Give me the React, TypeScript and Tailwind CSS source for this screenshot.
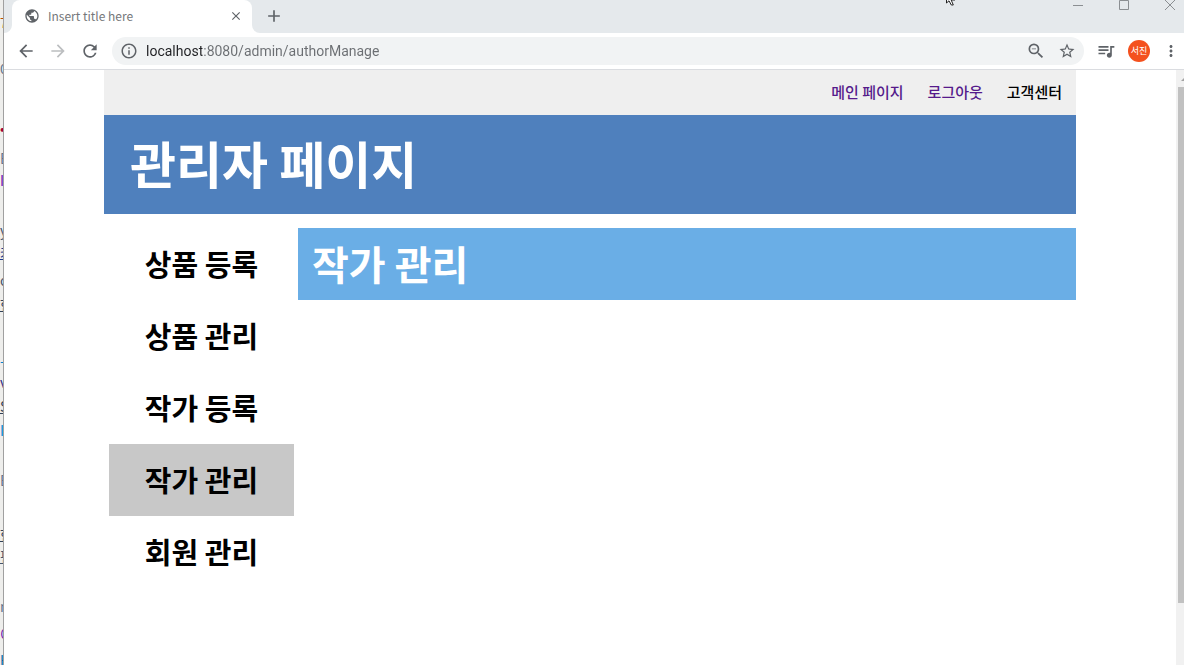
import {
  MdAdd,
  MdArrowBack,
  MdArrowForward,
  MdClose,
  MdInfoOutline,
  MdMoreVert,
  MdPublic,
  MdQueueMusic,
  MdRefresh,
  MdStarBorder,
  MdZoomOut,
} from "react-icons/md";
import clsx from "clsx";

const menu = [
  { label: "상품 등록", active: false },
  { label: "상품 관리", active: false },
  { label: "작가 등록", active: false },
  { label: "작가 관리", active: true },
  { label: "회원 관리", active: false },
];

// letters of the window behind that stick out at the left edge
const slivers = [
  { text: "7", row: "h-[46px] pt-3 text-amber-700" },
  { text: "0", row: "h-[60px] pt-3 text-slate-500" },
  { text: "•", row: "h-[42px] pt-3 text-rose-800" },
  { text: "E", row: "h-[22px] text-slate-500" },
  { text: "I", row: "h-[50px] text-purple-800" },
  { text: "y", row: "h-[22px] text-slate-600" },
  { text: "커", row: "h-[28px] text-blue-900 underline" },
  { text: "o", row: "h-[24px] text-slate-600" },
  { text: "현", row: "h-[56px] text-slate-700 underline" },
  { text: "-", row: "h-[22px] text-sky-600" },
  { text: "v", row: "h-[24px] text-indigo-900" },
  { text: "S", row: "h-[24px] text-slate-700 underline" },
  { text: "I", row: "h-[50px] text-sky-600" },
  { text: "E", row: "h-[54px] text-slate-500" },
  { text: "현", row: "h-[22px] text-slate-700 underline" },
  { text: "편", row: "h-[50px] text-slate-600 underline" },
  { text: "m", row: "h-[28px] text-slate-500" },
  { text: "이", row: "h-[26px] text-purple-800" },
  { text: "H", row: "h-[20px] text-sky-700" },
];

function BackWindow() {
  return (
    <div
      aria-hidden="true"
      className="h-full w-1 shrink-0 overflow-hidden border-r border-[#a0a0a0] bg-[#eeeeec]"
    >
      {slivers.map((s, i) => (
        <div key={i} className={clsx("text-sm leading-5", s.row)}>
          {s.text}
        </div>
      ))}
    </div>
  );
}

function TabStrip() {
  return (
    <div className="relative flex h-[33px] items-stretch bg-[#e5e9ec] text-[#5f6368]">
      <svg className="h-2 w-2 self-end" viewBox="0 0 8 8" fill="#fff">
        <path d="M8 0v8H0a8 8 0 0 0 8-8z" />
      </svg>
      <div className="flex w-[240px] items-center rounded-t-lg bg-white pr-2 pb-px pl-3">
        <MdPublic className="size-4" />
        <span className="ml-2 flex-1 text-xs leading-4 text-[#75777a]">
          Insert title here
        </span>
        <button aria-label="Close tab" className="flex size-4 items-center justify-center">
          <MdClose className="size-[14px]" />
        </button>
      </div>
      <svg className="h-2 w-2 self-end" viewBox="0 0 8 8" fill="#fff">
        <path d="M0 0v8h8a8 8 0 0 1-8-8z" />
      </svg>
      <button aria-label="New tab" className="ml-1 flex w-5 items-center justify-center pb-px">
        <MdAdd className="size-5" />
      </button>

      <div className="ml-auto flex items-start gap-[35px] pr-2 text-[#8b8f92]">
        <button aria-label="Minimize">
          <svg className="h-[11px] w-[11px]" viewBox="0 0 11 11" stroke="currentColor">
            <path d="M0 5.5h10" />
          </svg>
        </button>
        <button aria-label="Maximize">
          <svg className="h-[11px] w-[11px]" viewBox="0 0 11 11" fill="none" stroke="currentColor">
            <path d="M.5.5h9v9h-9z" />
          </svg>
        </button>
        <button aria-label="Close">
          <svg className="h-[11px] w-[11px]" viewBox="0 0 11 11" stroke="currentColor">
            <path d="M0 0l10 10M10 0L0 10" />
          </svg>
        </button>
      </div>

      {/* mouse pointer, its upper part is off screen */}
      <svg
        className="absolute top-0 right-[228px] h-[6px] w-[11px]"
        viewBox="0 0 11 6"
        fill="#fff"
        stroke="#222"
      >
        <path d="M1.5-8v11L4 .8 6.3 5h2L6.200 0H10z" />
      </svg>
    </div>
  );
}

function Toolbar() {
  return (
    <div className="flex h-[37px] items-center border-b border-[#dadce0] bg-white pl-3 text-[#5f6368]">
      <button aria-label="Back" className="mr-3">
        <MdArrowBack className="size-5" />
      </button>
      <button aria-label="Forward" className="mr-3 text-[#bcbec0]">
        <MdArrowForward className="size-5" />
      </button>
      <button aria-label="Reload" className="mr-3">
        <MdRefresh className="size-5" />
      </button>
      <div className="flex h-7 flex-1 items-center rounded-full bg-[#f1f3f4] pr-2 pl-2">
        <MdInfoOutline className="size-[18px]" />
        <input
          aria-label="Address"
          defaultValue="localhost:8080/admin/authorManage"
          className="ml-2 h-5 min-w-0 flex-1 bg-[linear-gradient(to_right,#202124_56px,#6b6e72_56px)] bg-clip-text font-[Roboto,sans-serif] text-sm text-transparent outline-none"
        />
        <button aria-label="Zoom" className="mr-3">
          <MdZoomOut className="size-5" />
        </button>
        <button aria-label="Bookmark">
          <MdStarBorder className="size-[18px]" />
        </button>
      </div>
      <button aria-label="Media" className="ml-3">
        <MdQueueMusic className="size-5" />
      </button>
      <button
        aria-label="Profile"
        className="ml-3 size-[22px] rounded-full bg-[#f4511e] text-[9px] leading-[22px] text-white"
      >
        서진
      </button>
      <button aria-label="Menu" className="ml-3 w-[22px]">
        <MdMoreVert className="size-[18px]" />
      </button>
    </div>
  );
}

function AdminPage() {
  return (
    <main className="flex-1 bg-white">
      <div className="mx-auto w-full max-w-[972px]">
        <nav className="flex h-[45px] items-center justify-end gap-6 bg-[#efefef] pr-[14px] pb-[2px] text-[15px] leading-5 font-medium text-[#551a8b]">
          <a href="#main">메인 페이지</a>
          <a href="#logout">로그아웃</a>
          <a href="#center" className="text-black">
            고객센터
          </a>
        </nav>
        <header className="flex h-[99px] items-center bg-[#4f80bd] pb-[6px] pl-[26px] text-white">
          <h1 className="text-[50px] leading-none font-bold">관리자 페이지</h1>
        </header>
        <div className="mt-[14px] flex items-start">
          <ul className="w-[194px] shrink-0 pr-1 pl-[5px]">
            {menu.map((item) => (
              <li key={item.label}>
                <a
                  href="#menu"
                  className={clsx(
                    "flex h-[72px] items-center justify-center pb-[2px] text-[29px] leading-none font-bold text-black",
                    item.active && "bg-[#c8c8c8]"
                  )}
                >
                  {item.label}
                </a>
              </li>
            ))}
          </ul>
          <h2 className="flex h-[72px] flex-1 items-center bg-[#6aaee6] pb-[2px] pl-[14px] text-[40px] leading-none font-bold text-white">
            작가 관리
          </h2>
        </div>
      </div>
    </main>
  );
}

function Scrollbar() {
  return (
    <div className="w-2 shrink-0 overflow-hidden bg-[#f1f1f1] pl-[2px]">
      <svg className="h-[17px] w-[15px]" viewBox="0 0 15 17" fill="#a3a3a3">
        <path d="M3 11l4-4 4 4z" />
      </svg>
      <div className="h-[516px] w-[15px] bg-[#c1c1c1]" />
    </div>
  );
}

export default function App() {
  return (
    <div className="flex h-screen overflow-hidden bg-white font-['Noto_Sans_CJK_KR',sans-serif]">
      <BackWindow />
      <div className="flex min-w-0 flex-1 flex-col">
        <TabStrip />
        <Toolbar />
        <div className="flex min-h-0 flex-1">
          <AdminPage />
          <Scrollbar />
        </div>
      </div>
    </div>
  );
}
